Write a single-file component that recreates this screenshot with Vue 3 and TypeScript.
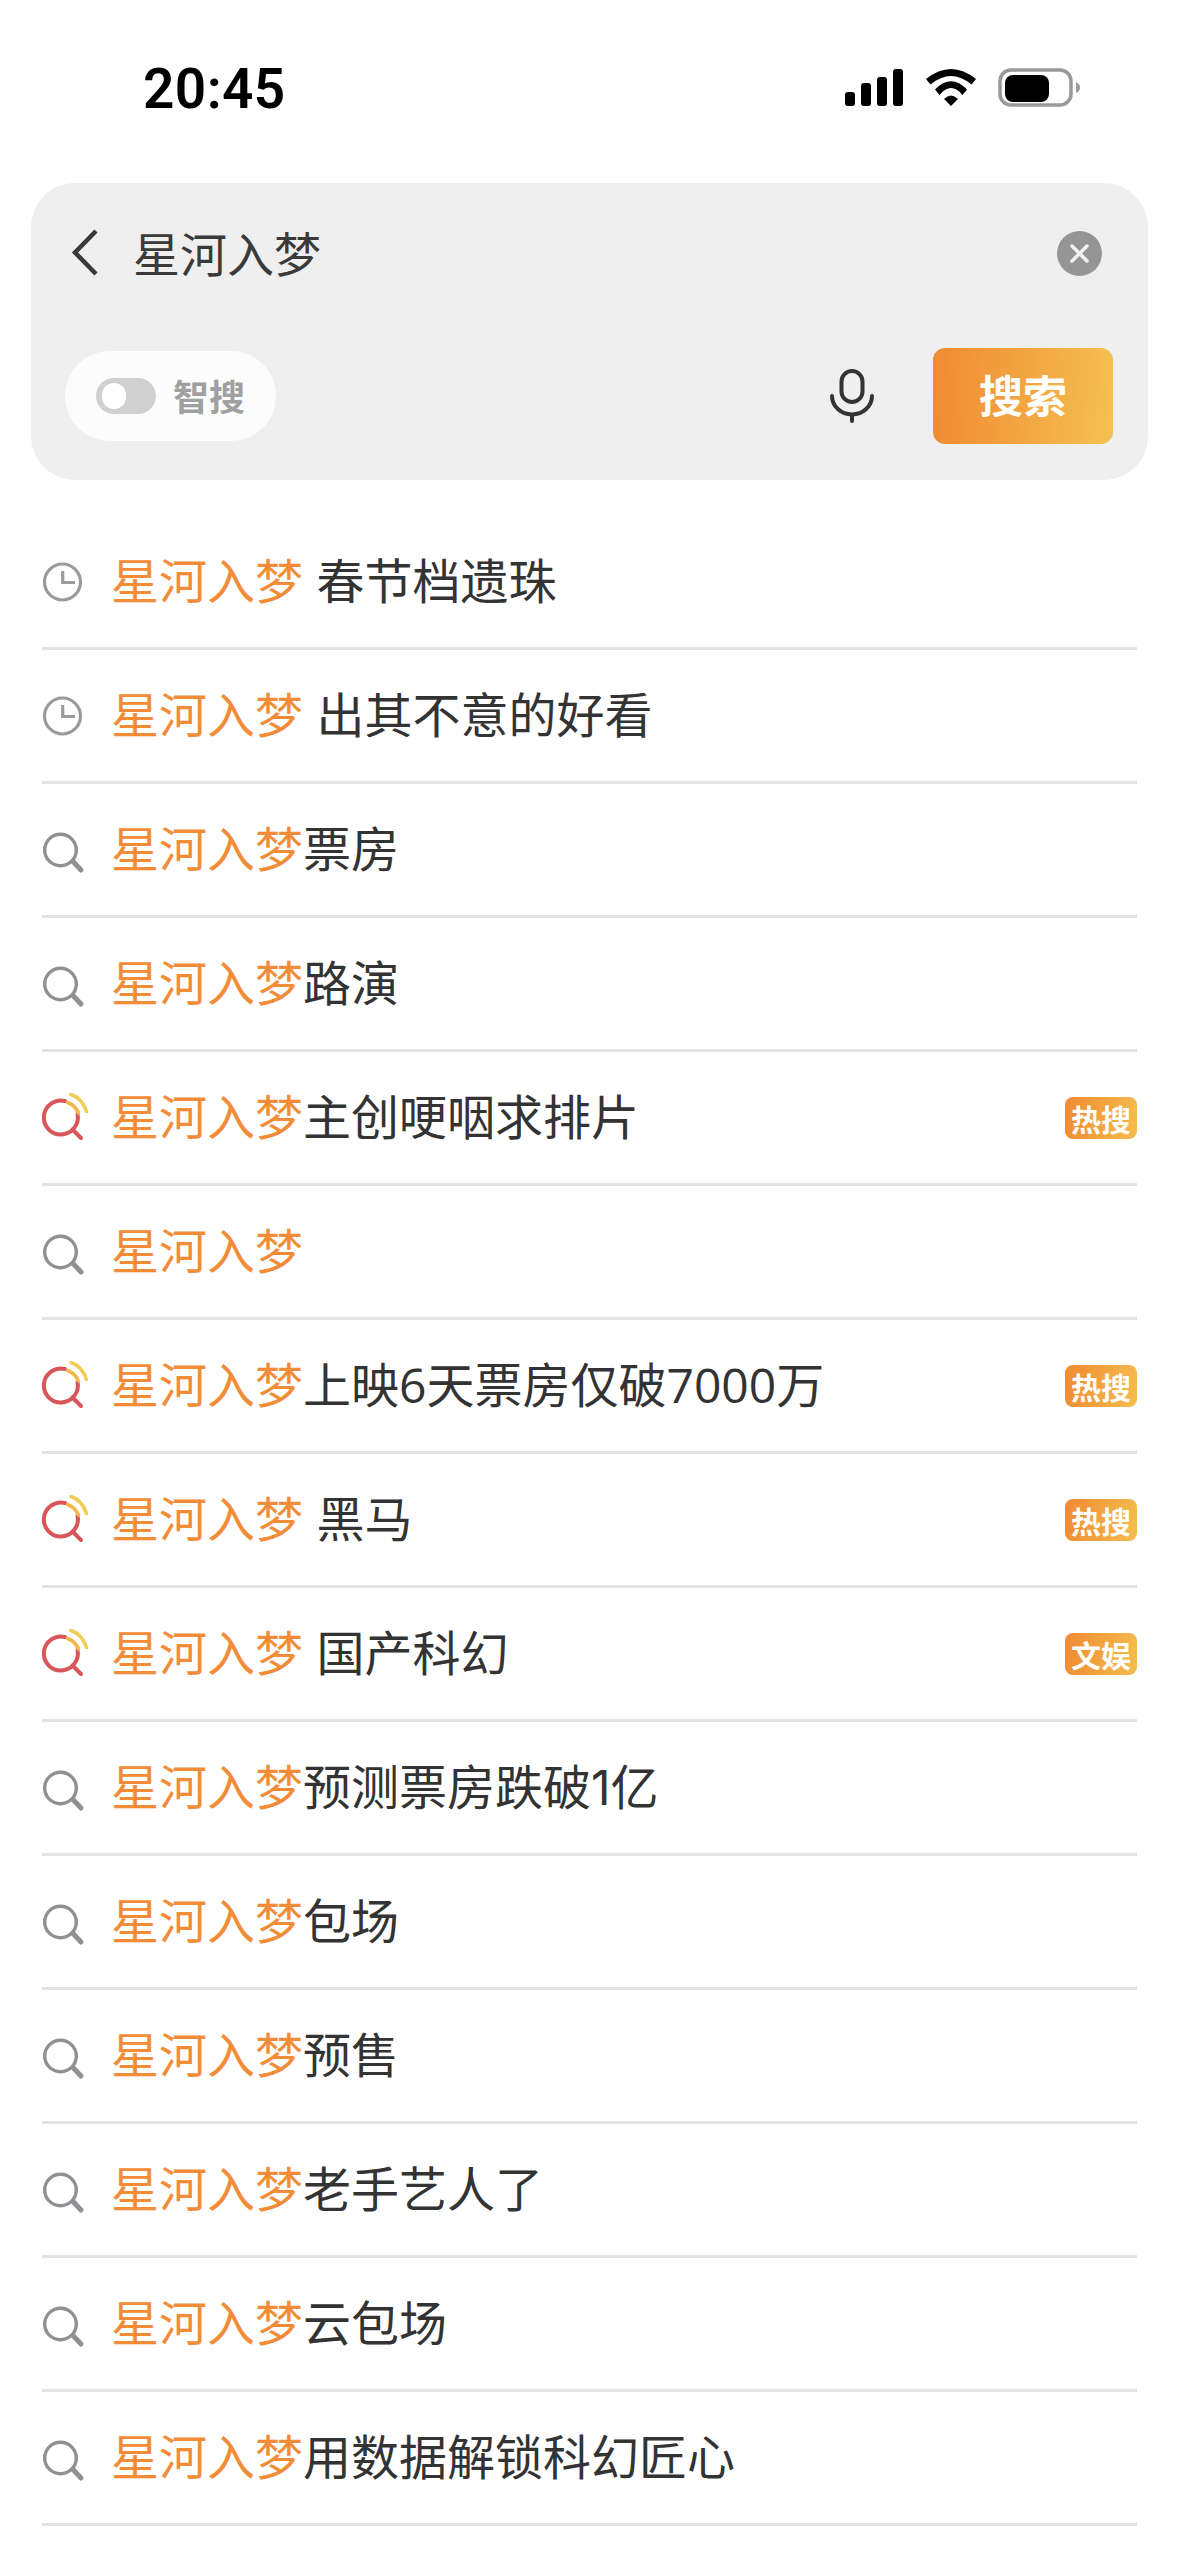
<script setup lang="ts">
type RowKind = 'history' | 'search' | 'hot'

interface Suggestion {
  kind: RowKind
  rest: string
  tag?: string
  wideDigits?: boolean
}

const keyword = '星河入梦'

const suggestions: Suggestion[] = [
  { kind: 'history', rest: ' 春节档遗珠' },
  { kind: 'history', rest: ' 出其不意的好看' },
  { kind: 'search', rest: '票房' },
  { kind: 'search', rest: '路演' },
  { kind: 'hot', rest: '主创哽咽求排片', tag: '热搜' },
  { kind: 'search', rest: '' },
  { kind: 'hot', rest: '上映6天票房仅破7000万', tag: '热搜', wideDigits: true },
  { kind: 'hot', rest: ' 黑马', tag: '热搜' },
  { kind: 'hot', rest: ' 国产科幻', tag: '文娱' },
  { kind: 'search', rest: '预测票房跌破1亿' },
  { kind: 'search', rest: '包场' },
  { kind: 'search', rest: '预售' },
  { kind: 'search', rest: '老手艺人了' },
  { kind: 'search', rest: '云包场' },
  { kind: 'search', rest: '用数据解锁科幻匠心' },
]
</script>

<template>
  <div class="screen">
    <header class="status">
      <span class="time">20:45</span>
      <div class="indicators">
        <svg class="signal" width="58" height="38" viewBox="0 0 58 38">
          <rect x="0" y="23" width="10" height="14" rx="3" />
          <rect x="16" y="14" width="10" height="23" rx="3" />
          <rect x="32" y="8" width="10" height="29" rx="3" />
          <rect x="48" y="0" width="10" height="37" rx="3" />
        </svg>
        <svg class="wifi" width="50" height="38" viewBox="0 0 50 38">
          <path d="M0 10Q25 -10 50 10L45.500 15.500Q25 -1.500 4.500 15.500Z" />
          <path d="M9 20.500Q25 4 41 20.500L36.500 26Q25 12 13.500 26Z" />
          <path d="M18 30Q25 23 32 30L25 37Z" />
        </svg>
        <svg class="battery" width="84" height="40" viewBox="0 0 84 40">
          <rect x="2" y="2" width="71" height="35" rx="11" fill="#fff" stroke="#999" stroke-width="3.500" />
          <rect x="7" y="7" width="44" height="27" rx="8" fill="#000" />
          <path d="M78 14Q82 16 82 19.500T78 25Z" fill="#999" />
        </svg>
      </div>
    </header>

    <section class="search-card">
      <div class="query-row">
        <svg class="back" width="30" height="50" viewBox="0 0 30 50">
          <path d="M25 3 4 24.500 25 46" fill="none" stroke="#3a3a3a" stroke-width="4.500" />
        </svg>
        <span class="query">{{ keyword }}</span>
        <svg class="clear" width="45" height="45" viewBox="0 0 45 45">
          <circle cx="22.500" cy="22.500" r="22.500" fill="#959596" />
          <path d="M15 15 30 30M30 15 15 30" stroke="#f2f2f2" stroke-width="3.500" stroke-linecap="round" />
        </svg>
      </div>
      <div class="action-row">
        <div class="smart-pill">
          <span class="toggle"><span class="thumb"></span></span>
          <span class="smart-label">智搜</span>
        </div>
        <svg class="mic" width="44" height="54" viewBox="0 0 44 54">
          <rect x="11.500" y="2" width="21" height="31" rx="10.500" fill="none" stroke="#333" stroke-width="4" />
          <path d="M2 27A20 18.500 0 0 0 42 27" fill="none" stroke="#333" stroke-width="4" stroke-linecap="round" />
          <path d="M22 46V52" stroke="#333" stroke-width="4" stroke-linecap="round" />
        </svg>
        <button class="search-btn" type="button">搜索</button>
      </div>
    </section>

    <ul class="suggestions">
      <li v-for="(item, i) in suggestions" :key="i" class="row">
        <svg class="row-icon" width="50" height="50" viewBox="0 0 50 50">
          <template v-if="item.kind === 'history'">
            <circle cx="22.500" cy="25" r="18" fill="none" stroke="#9b9b9d" stroke-width="3.200" />
            <path d="M22.700 14V25.500H35" fill="none" stroke="#9b9b9d" stroke-width="3.200" />
          </template>
          <template v-else-if="item.kind === 'search'">
            <circle cx="20.500" cy="25" r="15.800" fill="none" stroke="#909094" stroke-width="3.400" />
            <path d="M33 36.500 41 45" stroke="#909094" stroke-width="5" stroke-linecap="round" />
          </template>
          <template v-else>
            <path d="M28 10 39 21.500Q33 15 28 10Z" fill="#f3e3d2" />
            <path d="M25 8A17 17 0 1 0 37.500 21" fill="none" stroke="#d8555a" stroke-width="4" stroke-linecap="round" />
            <path d="M32.500 36.500 41 45" stroke="#d8555a" stroke-width="4" stroke-linecap="round" />
            <path d="M27.500 9.500Q35 12 38.500 20" fill="none" stroke="#f0b94a" stroke-width="3.600" stroke-linecap="round" />
            <path d="M31 1.500Q42 5 46.500 18.500" fill="none" stroke="#f2cd55" stroke-width="3.600" stroke-linecap="round" />
          </template>
        </svg>
        <span class="label" :class="{ 'wide-digits': item.wideDigits }"><span class="hit">{{ keyword }}</span>{{ item.rest }}</span>
        <span v-if="item.tag" class="tag">{{ item.tag }}</span>
      </li>
    </ul>
  </div>
</template>

<style scoped>
.screen {
  width: 1179px;
  height: 2556px;
  overflow: hidden;
  background: #fff;
  font-family: "Noto Sans CJK SC", "Liberation Sans", sans-serif;
  color: #333;
}

.status {
  height: 183px;
  box-sizing: border-box;
  display: flex;
  justify-content: space-between;
  padding: 54px 97px 0 143px;
}

.time {
  font-family: Roboto, "Liberation Sans", sans-serif;
  font-size: 55px;
  font-weight: 600;
  letter-spacing: 0.4px;
  line-height: 70px;
  color: #000;
}

.indicators {
  display: flex;
  align-items: flex-start;
  padding-top: 14px;
}

.signal {
  margin-top: 1px;
}

.wifi {
  margin: 1px 22px 0 23px;
}

.search-card {
  margin: 0 31px;
  height: 297px;
  box-sizing: border-box;
  background: #efeff0;
  border-radius: 44px;
}

.query-row {
  height: 140px;
  display: flex;
  align-items: center;
  padding: 0 46px 0 40px;
}

.back {
  flex: none;
}

.query {
  flex: 1;
  margin-left: 32px;
  padding-bottom: 3px;
  font-size: 47px;
  line-height: 1;
  color: #3a3a3a;
}

.action-row {
  margin-top: 25px;
  height: 96px;
  display: flex;
  align-items: center;
  padding: 0 35px 0 34px;
}

.smart-pill {
  width: 211px;
  height: 90px;
  box-sizing: border-box;
  border-radius: 45px;
  background: #fcfcfc;
  display: flex;
  align-items: center;
  padding-left: 31px;
}

.toggle {
  width: 60px;
  height: 36px;
  box-sizing: border-box;
  padding: 5px 6px;
  border-radius: 18px;
  background: #d0d0d0;
}

.thumb {
  display: block;
  width: 24px;
  height: 26px;
  border-radius: 13px;
  background: #fff;
}

.smart-label {
  margin-left: 17px;
  padding-bottom: 3px;
  font-size: 36px;
  font-weight: 700;
  line-height: 1;
  color: #a0a0a0;
}

.mic {
  margin-left: auto;
  margin-right: 59px;
}

.search-btn {
  width: 180px;
  height: 96px;
  border: 0;
  padding: 0 0 4px;
  border-radius: 12px;
  background: linear-gradient(95deg, #f08a32, #f5c052);
  font-family: inherit;
  font-size: 44px;
  font-weight: 700;
  color: #fff;
}

.suggestions {
  list-style: none;
  margin: 36px 42px 0;
  padding: 0;
}

.row {
  height: 134px;
  box-sizing: border-box;
  border-bottom: 3px solid #e3e3e3;
  display: flex;
  align-items: center;
}

.row-icon {
  flex: none;
  margin-left: -2px;
}

.label {
  flex: 1;
  margin-left: 21px;
  font-family: Inter, "Noto Sans CJK SC", sans-serif;
  font-size: 48px;
  line-height: 1;
  white-space: pre;
  color: #333;
}

.wide-digits {
  padding-bottom: 2px;
  font-family: "Open Sans", "Noto Sans CJK SC", sans-serif;
}

.hit {
  color: #f28c38;
}

.tag {
  width: 72px;
  height: 42px;
  flex: none;
  border-radius: 8px;
  background: linear-gradient(100deg, #f08a32, #f5bd4e);
  font-size: 30px;
  font-weight: 700;
  line-height: 42px;
  text-align: center;
  color: #fff;
}
</style>

<style>
html,
body {
  margin: 0;
  background: #fff;
}
</style>
